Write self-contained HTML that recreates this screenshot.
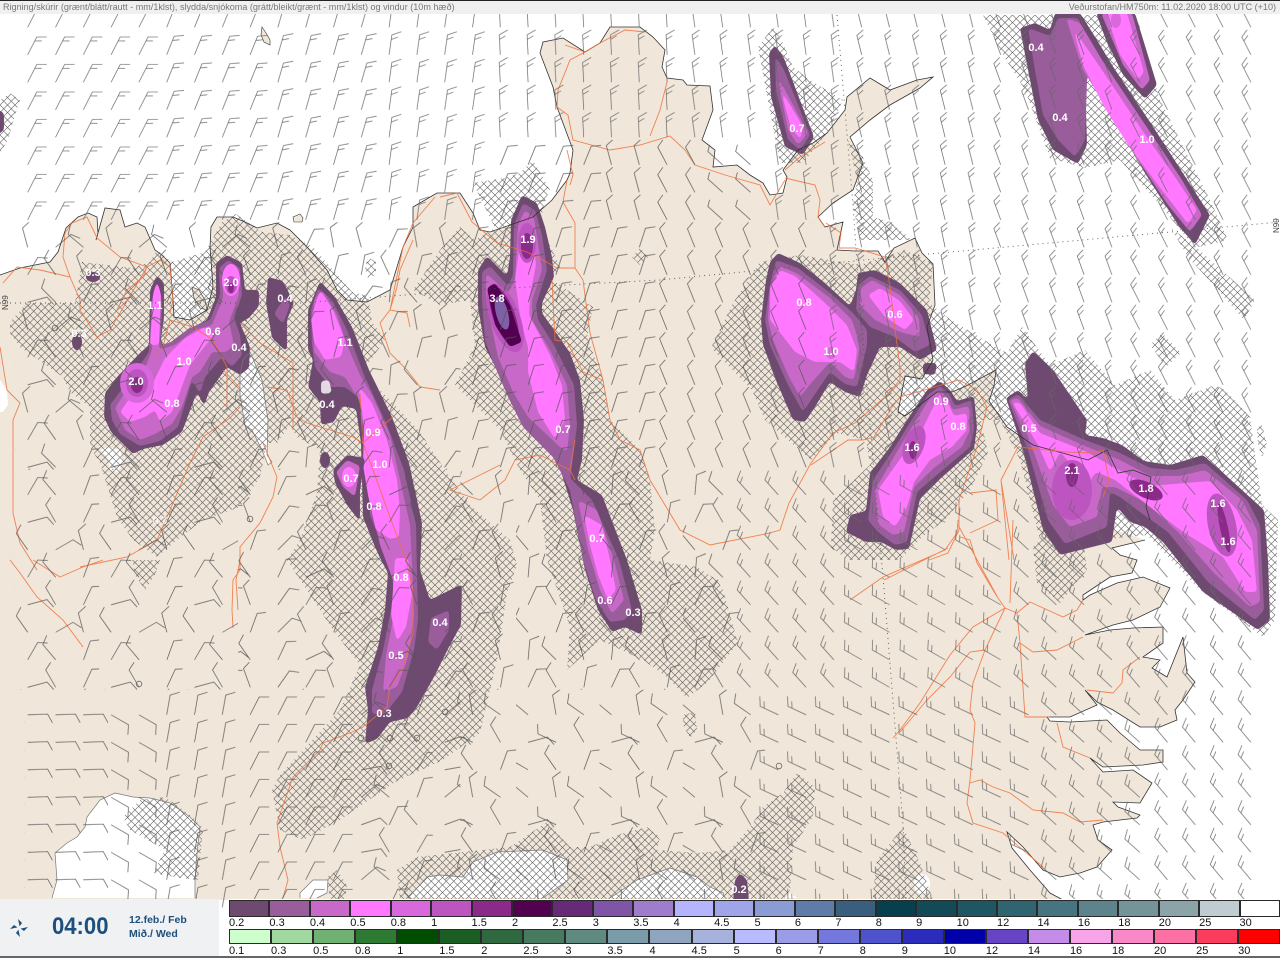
<!DOCTYPE html>
<html><head><meta charset="utf-8"><title>Veðurstofan HM750m</title>
<style>
html,body{margin:0;padding:0;background:#fff}
#w{position:relative;width:1280px;height:958px;overflow:hidden;background:#fff;font-family:"Liberation Sans",sans-serif}
svg{position:absolute;left:0;top:0}
.rn path{filter:url(#s)}
#t{position:absolute;left:0;top:0;width:1280px;height:13px;background:#f0f0f0;border-top:1px solid #222;font-size:9.05px;line-height:12px;color:#777;white-space:nowrap}
#t span{position:absolute;left:3px;top:0}
#t em{position:absolute;right:4px;top:0;font-style:normal}
#p{position:absolute;left:0;top:899px;width:219px;height:58px;background:#f0f1f2;color:#1d4f7e}
#p .c{position:absolute;left:52px;top:14px;font-size:24px;font-weight:bold;line-height:28px;transform:scaleX(.92);transform-origin:0 0}
#p .d{position:absolute;left:129px;top:14px;font-size:10.5px;line-height:14px;font-weight:bold;white-space:nowrap}
#l{position:absolute;left:229px;top:899px;width:1051px;height:59px;background:#fff}
.r{position:absolute;left:0;width:1051px;display:flex}
.r b{display:block;flex:1;box-sizing:border-box;border:1px solid #2a2a2a;position:relative}
.r i{position:absolute;left:-1px;font:11px/12px "Liberation Sans",sans-serif;color:#111;white-space:nowrap}
#r1{top:1px}#r1 b{height:17px}#r1 i{top:16px}
#r2{top:30px}#r2 b{height:15px}#r2 i{top:15px}
#e{position:absolute;left:0;top:956px;width:1280px;height:2px;background:#666}
</style></head><body><div id="w">
<svg width="1280" height="958" viewBox="0 0 1280 958">
<defs>
<filter id="s" x="-20%" y="-20%" width="140%" height="140%" color-interpolation-filters="sRGB"><feGaussianBlur stdDeviation="1.8"/><feComponentTransfer><feFuncA type="linear" slope="8" intercept="-3.5"/></feComponentTransfer></filter>
<path id="f" d="M0 0V-20l8.9-4.5M0-15.5l6.2-3.2" fill="none" stroke="#666" stroke-width=".7"/>
<path id="o" d="M0 0V-20l8.9-4.5" fill="none" stroke="#555" stroke-width=".7"/>
<pattern id="h" width="7.5" height="7.5" patternUnits="userSpaceOnUse"><path d="M-1 -1L8.5 8.5M8.5 -1L-1 8.5" stroke="#5a5a5a" stroke-width=".6" fill="none"/></pattern>
<pattern id="L27" x="23.7" y="2.3" width="27.8" height="27.5" patternUnits="userSpaceOnUse"><use href="#f" transform="translate(4,25)rotate(27)"/></pattern>
<pattern id="L22" x="23.7" y="2.3" width="27.8" height="27.5" patternUnits="userSpaceOnUse"><use href="#f" transform="translate(4,25)rotate(22)"/></pattern>
<pattern id="L16" x="23.7" y="2.3" width="27.8" height="27.5" patternUnits="userSpaceOnUse"><use href="#f" transform="translate(4,25)rotate(16)"/></pattern>
<pattern id="L8" x="23.7" y="2.3" width="27.8" height="27.5" patternUnits="userSpaceOnUse"><use href="#f" transform="translate(4,25)rotate(8)"/></pattern>
<pattern id="Lo22" x="23.7" y="2.3" width="27.8" height="27.5" patternUnits="userSpaceOnUse"><use href="#o" transform="translate(4,25)rotate(22)"/></pattern>
<pattern id="Lo20" x="23.7" y="2.3" width="27.8" height="27.5" patternUnits="userSpaceOnUse"><use href="#o" transform="translate(4,25)rotate(18)"/></pattern>
<pattern id="Lo8" x="23.7" y="2.3" width="27.8" height="27.5" patternUnits="userSpaceOnUse"><use href="#o" transform="translate(4,25)rotate(10)"/></pattern>
<pattern id="Lo25" x="23.7" y="2.3" width="27.8" height="27.5" patternUnits="userSpaceOnUse"><use href="#o" transform="translate(4,25)rotate(27)"/></pattern>
<pattern id="R3" x="7.7" y="2.3" width="27.8" height="27.5" patternUnits="userSpaceOnUse"><use href="#f" transform="translate(20,25)rotate(-3)"/></pattern>
<pattern id="R8" x="7.7" y="2.3" width="27.8" height="27.5" patternUnits="userSpaceOnUse"><use href="#f" transform="translate(20,25)rotate(-8)"/></pattern>
<pattern id="R14" x="7.7" y="2.3" width="27.8" height="27.5" patternUnits="userSpaceOnUse"><use href="#f" transform="translate(20,25)rotate(-14)"/></pattern>
<pattern id="R20" x="7.7" y="2.3" width="27.8" height="27.5" patternUnits="userSpaceOnUse"><use href="#f" transform="translate(20,25)rotate(-20)"/></pattern>
<pattern id="R27" x="7.7" y="2.3" width="27.8" height="27.5" patternUnits="userSpaceOnUse"><use href="#f" transform="translate(20,25)rotate(-27)"/></pattern>
<pattern id="R12" x="7.7" y="2.3" width="27.8" height="27.5" patternUnits="userSpaceOnUse"><use href="#f" transform="translate(20,25)rotate(-12)"/></pattern>
<pattern id="R42" x="7.7" y="2.3" width="27.8" height="27.5" patternUnits="userSpaceOnUse"><use href="#f" transform="translate(20,25)rotate(-42)"/></pattern>
<pattern id="R47" x="7.7" y="2.3" width="27.8" height="27.5" patternUnits="userSpaceOnUse"><use href="#f" transform="translate(20,25)rotate(-47)"/></pattern>
<pattern id="R40" x="7.7" y="2.3" width="27.8" height="27.5" patternUnits="userSpaceOnUse"><use href="#f" transform="translate(20,25)rotate(-40)"/></pattern>
<pattern id="Ro15" x="7.7" y="2.3" width="27.8" height="27.5" patternUnits="userSpaceOnUse"><use href="#o" transform="translate(20,25)rotate(-15)"/></pattern>
<pattern id="Ro28" x="7.7" y="2.3" width="27.8" height="27.5" patternUnits="userSpaceOnUse"><use href="#o" transform="translate(20,25)rotate(-28)"/></pattern>
<pattern id="Ro22" x="7.7" y="2.3" width="27.8" height="27.5" patternUnits="userSpaceOnUse"><use href="#o" transform="translate(20,25)rotate(-22)"/></pattern>
<pattern id="E48" x="2.7" y="7.3" width="27.8" height="27.5" patternUnits="userSpaceOnUse"><use href="#o" transform="translate(25,20)rotate(-48)"/></pattern>
<pattern id="E60" x="2.7" y="7.3" width="27.8" height="27.5" patternUnits="userSpaceOnUse"><use href="#f" transform="translate(25,20)rotate(-60)"/></pattern>
<pattern id="E65" x="2.7" y="7.3" width="27.8" height="27.5" patternUnits="userSpaceOnUse"><use href="#f" transform="translate(25,20)rotate(-65)"/></pattern>
<pattern id="R48" x="7.7" y="2.3" width="27.8" height="27.5" patternUnits="userSpaceOnUse"><use href="#f" transform="translate(20,25)rotate(-48)"/></pattern>
<pattern id="D88" x="24.7" y="17.3" width="27.8" height="27.5" patternUnits="userSpaceOnUse"><use href="#o" transform="translate(3,10)rotate(88)"/></pattern>
<pattern id="S120" x="19.7" y="25.3" width="27.8" height="27.5" patternUnits="userSpaceOnUse"><use href="#o" transform="translate(8,2)rotate(120)"/></pattern>
<pattern id="CA" x="15.7" y="2.3" width="83.4" height="82.5" patternUnits="userSpaceOnUse"><use href="#o" transform="translate(12,25)rotate(30)"/><use href="#o" transform="translate(40,25)rotate(-35)"/><use href="#o" transform="translate(67.8,25)rotate(-20)"/><use href="#o" transform="translate(12,52.5)rotate(75)"/><use href="#o" transform="translate(40,52.5)rotate(-45)"/><use href="#o" transform="translate(67.8,52.5)rotate(25)"/><use href="#o" transform="translate(12,80)rotate(-15)"/><use href="#o" transform="translate(40,80)rotate(50)"/><use href="#o" transform="translate(67.8,80)rotate(-50)"/></pattern>
<pattern id="CB" x="15.7" y="2.3" width="83.4" height="82.5" patternUnits="userSpaceOnUse"><use href="#o" transform="translate(12,25)rotate(10)"/><use href="#o" transform="translate(40,25)rotate(-25)"/><use href="#o" transform="translate(67.8,25)rotate(15)"/><use href="#o" transform="translate(12,52.5)rotate(35)"/><use href="#o" transform="translate(40,52.5)rotate(5)"/><use href="#o" transform="translate(67.8,52.5)rotate(-40)"/><use href="#o" transform="translate(12,80)rotate(-15)"/><use href="#o" transform="translate(40,80)rotate(25)"/><use href="#o" transform="translate(67.8,80)rotate(-10)"/></pattern>
<pattern id="CC" x="15.7" y="2.3" width="83.4" height="82.5" patternUnits="userSpaceOnUse"><use href="#o" transform="translate(12,25)rotate(75)"/><use href="#o" transform="translate(40,25)rotate(-30)"/><use href="#o" transform="translate(67.8,25)rotate(25)"/><use href="#o" transform="translate(12,52.5)rotate(-35)"/><use href="#o" transform="translate(40,52.5)rotate(60)"/><use href="#o" transform="translate(67.8,52.5)rotate(-15)"/><use href="#o" transform="translate(12,80)rotate(30)"/><use href="#o" transform="translate(40,80)rotate(-40)"/><use href="#o" transform="translate(67.8,80)rotate(20)"/></pattern>
<pattern id="CD" x="15.7" y="2.3" width="83.4" height="82.5" patternUnits="userSpaceOnUse"><use href="#o" transform="translate(12,25)rotate(35)"/><use href="#o" transform="translate(40,25)rotate(30)"/><use href="#o" transform="translate(67.8,25)rotate(-20)"/><use href="#o" transform="translate(12,52.5)rotate(45)"/><use href="#o" transform="translate(40,52.5)rotate(-25)"/><use href="#o" transform="translate(67.8,52.5)rotate(20)"/><use href="#o" transform="translate(12,80)rotate(25)"/><use href="#o" transform="translate(40,80)rotate(65)"/><use href="#o" transform="translate(67.8,80)rotate(-35)"/></pattern>
<pattern id="CE" x="15.7" y="2.3" width="83.4" height="82.5" patternUnits="userSpaceOnUse"><use href="#o" transform="translate(12,25)rotate(25)"/><use href="#o" transform="translate(40,25)rotate(-30)"/><use href="#o" transform="translate(67.8,25)rotate(10)"/><use href="#o" transform="translate(12,52.5)rotate(-40)"/><use href="#o" transform="translate(40,52.5)rotate(20)"/><use href="#o" transform="translate(67.8,52.5)rotate(-25)"/><use href="#o" transform="translate(12,80)rotate(5)"/><use href="#o" transform="translate(40,80)rotate(-45)"/><use href="#o" transform="translate(67.8,80)rotate(-15)"/></pattern>
<pattern id="CF" x="15.7" y="2.3" width="83.4" height="82.5" patternUnits="userSpaceOnUse"><use href="#o" transform="translate(12,25)rotate(80)"/><use href="#o" transform="translate(40,25)rotate(-30)"/><use href="#o" transform="translate(67.8,25)rotate(30)"/><use href="#o" transform="translate(12,52.5)rotate(50)"/><use href="#o" transform="translate(40,52.5)rotate(-50)"/><use href="#o" transform="translate(67.8,52.5)rotate(20)"/><use href="#o" transform="translate(12,80)rotate(70)"/><use href="#o" transform="translate(40,80)rotate(25)"/><use href="#o" transform="translate(67.8,80)rotate(-40)"/></pattern>
<pattern id="CG" x="15.7" y="2.3" width="83.4" height="82.5" patternUnits="userSpaceOnUse"><use href="#o" transform="translate(12,25)rotate(-60)"/><use href="#o" transform="translate(40,25)rotate(-35)"/><use href="#o" transform="translate(67.8,25)rotate(20)"/><use href="#o" transform="translate(12,52.5)rotate(-50)"/><use href="#o" transform="translate(40,52.5)rotate(-10)"/><use href="#o" transform="translate(67.8,52.5)rotate(-55)"/><use href="#o" transform="translate(12,80)rotate(75)"/><use href="#o" transform="translate(40,80)rotate(-65)"/><use href="#o" transform="translate(67.8,80)rotate(-30)"/></pattern>
</defs>

<!-- land -->
<path fill="#f0e6d9" d="M0,275 20,268 50,262 58,252 66,228 78,217 88,213 97,217 98,233 96,240 105,208 120,210 125,227 137,223 145,227 155,250 162,255 170,263 173,300 174,317 190,320 207,310 213,287 210,247 211,227 217,217 233,217 245,222 257,228 277,223 290,230 307,247 327,270 337,290 347,300 367,302 390,290 397,267 403,247 413,227 413,207 437,193 460,193 473,213 480,230 490,232 533,217 552,200 567,180 570,173 573,150 557,107 553,87 540,53 543,42 563,38 585,52 600,43 610,27 640,27 653,37 665,50 662,67 667,78 683,80 687,85 710,86 713,110 702,140 715,150 713,167 737,165 750,175 763,183 770,195 783,193 787,177 783,170 798,150 813,143 827,133 845,110 847,97 870,78 890,90 917,80 933,77 920,88 890,105 870,120 850,137 863,163 853,190 833,203 818,217 825,227 843,222 837,250 855,251 878,251 885,262 894,248 915,238 922,253 933,264 935,305 927,327 933,360 922,379 905,376 898,412 905,416 937,392 952,392 966,386 996,370 994,386 989,401 1007,427 1033,445 1088,460 1107,464 1115,530 1145,540 1112,548 1120,555 1137,560 1132,573 1110,577 1083,595 1083,600 1090,595 1117,583 1143,577 1170,588 1160,607 1133,620 1113,625 1085,635 1110,630 1133,628 1163,627 1163,643 1143,657 1160,660 1152,668 1167,677 1183,637 1187,673 1195,682 1183,700 1175,710 1177,720 1160,727 1140,727 1113,710 1097,702 1085,690 1097,705 1070,717 1047,717 1050,721 1070,722 1107,720 1120,733 1140,750 1163,750 1163,762 1143,765 1103,767 1090,758 1103,772 1133,770 1152,783 1140,803 1113,802 1118,807 1140,815 1137,818 1103,822 1093,825 1098,840 1112,850 1097,867 1080,873 1060,877 1043,870 1023,847 1007,832 1012,848 1030,870 1050,893 1063,900 0,900Z"/>
<path fill="#f0e6d9" stroke="#333" stroke-width=".6" d="M262,27 266,33 270,40 270,45 264,42 261,35Z M293,217 300,214 303,218 302,222 294,222Z M192,287 199,290 205,300 207,310 200,308 194,298Z"/>
<!-- white holes -->
<path fill="#fff" d="M0,380 7,390 8,405 3,412 0,412Z M237,320 243,320 243,360 250,352 262,380 268,420 267,455 272,462 268,465 262,450 252,430 245,425 240,395 240,375Z M52,898 57,880 55,853 67,843 77,837 85,827 87,817 100,800 115,793 133,797 150,798 170,803 190,817 200,827 197,853 195,880 195,898Z M300,898 300,893 313,880 328,880 327,893 317,898Z M408,898 427,877 440,875 463,877 473,862 497,852 543,850 567,860 568,880 543,898Z M610,898 637,880 670,868 697,877 710,887 723,893 725,898Z M785,898 790,893 797,898Z M100,450 108,447 120,450 123,462 118,472 110,470 108,458Z"/>
<ellipse cx="922" cy="884" rx="8" ry="10" fill="#fff"/>
<!-- hatch -->
<g fill="url(#h)">
<path d="M10,333 10,322 27,303 75,303 82,262 132,268 150,262 157,250 172,262 205,252 222,222 236,214 262,232 290,235 313,247 340,278 352,292 368,296 372,322 385,340 362,372 393,403 420,432 445,470 470,505 510,540 517,565 507,593 497,660 480,733 443,760 395,782 340,820 303,840 280,830 272,790 280,775 340,710 360,665 333,630 320,610 287,560 300,540 317,493 320,450 297,437 290,425 277,443 267,443 260,477 240,507 203,520 177,540 157,557 133,540 117,517 100,463 90,447 90,407 70,392 63,377 20,347Z"/>
<path d="M413,290 440,250 460,227 475,240 495,228 473,183 505,178 520,173 533,160 550,190 545,200 540,223 560,267 552,280 593,307 587,337 603,380 610,420 640,450 650,480 655,530 650,560 697,567 717,580 723,590 738,643 707,683 687,698 667,677 643,660 600,640 567,670 570,627 547,560 540,500 520,470 500,430 455,385 475,345 470,300 440,305Z"/>
<path d="M733,303 711,348 752,390 765,420 811,460 837,433 866,440 870,465 833,500 831,547 848,560 900,560 922,537 945,520 970,490 988,453 981,420 1000,420 1020,460 1040,540 1033,547 1037,583 1060,603 1087,570 1083,540 1100,540 1147,535 1200,590 1263,637 1275,620 1278,520 1262,505 1250,417 1225,390 1215,385 1175,400 1150,370 1115,385 1085,350 1050,365 1022,327 1007,353 996,347 951,320 929,303 933,263 905,250 860,265 800,255 760,262Z"/>
<path d="M983,15 1130,15 1143,45 1160,100 1210,200 1228,240 1195,248 1160,205 1120,160 1085,168 1050,158 1025,90 1000,50Z"/>
<path d="M1170,227 1196,247 1255,300 1244,320 1218,290 1188,257Z"/>
<path d="M1162,333 1181,353 1166,367 1150,345Z"/>
<path d="M1257,428 1262,425 1267,445 1262,457 1258,445Z"/>
<path d="M773,27 783,43 793,67 810,80 843,100 827,133 803,163 780,163 773,127 758,47Z"/>
<path d="M848,140 862,155 873,180 873,217 890,222 912,240 860,240 853,205 857,180Z"/>
<path d="M397,870 417,857 510,847 547,822 570,847 590,847 617,835 647,827 660,837 657,850 697,853 730,850 753,823 763,807 783,793 797,773 815,787 813,817 793,847 790,890 783,900 400,900Z"/>
<path d="M327,877 337,870 347,885 345,900 330,900Z"/>
<path d="M873,893 877,860 903,827 920,863 933,900 873,900Z"/>
<path d="M123,817 140,800 165,797 190,815 203,828 198,880 180,878 153,873 165,850 130,830Z"/>
<path d="M132,560 160,560 155,575 145,590 135,575Z"/>
<path d="M683,715 695,712 697,730 690,738 683,725Z"/>
<path d="M0,100 10,93 20,100 15,115 8,140 0,153Z"/>
<path d="M368,257 376,262 376,275 368,278 365,268Z"/>
<path d="M640,248 648,257 640,265 632,257Z"/>
</g>
<!-- rain -->
<g class="rn">
<!-- R1 -->
<path fill="#6f4a70" d="M105,393 117,377 140,353 149,345 150,290 157,275 164,283 164,317 160,346 167,345 187,330 207,320 216,297 216,263 227,255 242,263 245,290 259,290 259,306 249,318 240,323 250,347 249,368 240,375 227,367 209,392 204,406 197,392 182,432 163,445 143,449 133,454 111,432 104,417Z"/>
<path fill="#9a5d9c" d="M110,405 125,385 140,365 149,352 152,300 157,280 162,300 161,345 172,342 190,328 210,320 220,295 219,268 228,260 240,268 242,295 234,318 240,335 242,355 232,367 222,357 205,377 200,394 192,380 178,427 160,441 140,446 120,434 112,420Z"/>
<path fill="#c868c8" d="M115,408 128,388 145,368 152,350 154,300 157,285 161,300 159,350 175,345 195,330 212,325 223,298 223,272 230,266 238,275 239,295 229,322 234,345 226,352 212,352 200,372 192,377 182,407 172,424 155,434 140,440 125,430Z"/>
<path fill="#ff78ff" d="M120,412 132,395 152,385 165,358 185,338 205,327 214,335 202,350 190,365 180,392 172,412 160,422 155,410 145,417 130,422Z M150,345 153,295 157,280 161,295 159,345Z"/>
<ellipse cx="231" cy="280" rx="9" ry="16" fill="#ff78ff"/><ellipse cx="231" cy="285" rx="6" ry="9" fill="#bd55c0"/><ellipse cx="231" cy="288" rx="3" ry="5" fill="#8c2a8c"/>
<ellipse cx="137" cy="383" rx="17" ry="20" fill="#d968dd"/><ellipse cx="137" cy="383" rx="11" ry="14" fill="#bd55c0"/><ellipse cx="137" cy="385" rx="6" ry="8" fill="#8c2a8c"/>
<ellipse cx="93" cy="277" rx="7" ry="5" fill="#6f4a70"/><ellipse cx="77" cy="342" rx="5" ry="8" fill="#6f4a70"/><ellipse cx="325" cy="460" rx="5" ry="8" fill="#6f4a70"/>
<!-- R2 -->
<path fill="#6f4a70" d="M268,277 283,281 294,303 287,320 287,352 272,338 266,303Z"/><path fill="#9a5d9c" d="M274,314 285,296 290,305 283,324Z"/>
<!-- R3 -->
<path fill="#6f4a70" d="M320,281 335,297 352,327 369,370 392,417 409,463 422,523 420,570 430,600 446,592 462,584 461,625 449,647 434,677 417,707 408,718 390,722 377,739 365,744 368,710 365,687 378,647 385,610 388,573 381,560 375,547 363,517 361,443 356,409 342,406 334,422 321,425 320,402 308,387 313,360 308,350 308,310Z"/>
<path fill="#9a5d9c" d="M318,288 332,300 347,330 364,375 387,425 404,470 416,525 417,575 418,620 414,650 402,692 385,714 372,714 372,690 383,650 391,610 395,575 383,548 370,515 366,440 358,397 345,387 330,387 315,367 312,345 311,310Z M428,642 431,618 449,610 449,630 437,650Z"/>
<path fill="#c868c8" d="M314,300 322,290 337,315 347,345 360,375 372,395 390,435 399,475 410,525 412,565 414,615 408,657 397,687 383,692 386,655 393,620 393,580 380,545 372,510 366,450 360,402 345,377 330,372 314,352Z"/>
<path fill="#ff78ff" d="M311,318 320,290 333,310 345,340 341,357 325,360 314,342Z M358,385 372,403 387,440 397,480 400,510 399,537 390,539 376,530 368,495 363,465 364,425Z M395,558 408,558 412,595 406,627 397,642 391,615 393,590Z"/>
<path fill="#6f4a70" d="M333,470 347,455 365,458 360,490 360,522 347,505 335,483Z"/><path fill="#c868c8" d="M336,472 347,460 360,466 355,497 343,487Z"/><ellipse cx="349" cy="477" rx="7" ry="10" fill="#ff78ff"/>
<path fill="#fff" d="M321,381 329,380 332,393 321,394Z" opacity=".8"/>
<!-- R4 -->
<path fill="#6f4a70" d="M522,195 537,203 545,227 552,257 554,277 542,303 542,313 559,337 570,353 580,380 584,420 582,460 577,480 602,495 627,560 642,610 642,635 625,627 612,632 598,610 585,570 573,510 558,462 528,432 513,402 498,372 485,347 478,307 478,270 487,256 507,276 510,257 511,220Z"/>
<path fill="#9a5d9c" d="M482,300 482,272 490,266 508,286 513,275 514,225 523,203 535,210 542,235 547,270 536,305 538,320 554,345 574,385 577,425 572,465 570,478 592,500 619,560 632,610 625,620 610,622 596,600 583,560 570,490 553,457 523,427 508,397 493,362 485,340Z"/>
<path fill="#c868c8" d="M486,300 486,273 508,293 515,280 518,225 525,210 534,218 539,250 542,270 532,300 532,320 550,350 567,385 570,425 567,452 560,447 528,417 513,392 498,357Z M578,500 597,510 614,560 624,600 612,614 600,590 588,550Z"/>
<path fill="#ff78ff" d="M515,280 519,250 526,220 533,235 536,265 530,295 529,315 550,355 562,385 565,420 555,439 538,412 528,372 528,347 521,322Z M584,515 602,525 610,560 616,590 608,600 598,575 590,545Z"/>
<ellipse cx="527" cy="243" rx="9" ry="20" fill="#bd55c0"/><ellipse cx="527" cy="246" rx="6" ry="13" fill="#8c2a8c"/>
<ellipse cx="505" cy="318" rx="15" ry="36" fill="#bd55c0" transform="rotate(-20 505 318)"/>
<ellipse cx="504" cy="316" rx="11" ry="31" fill="#8c2a8c" transform="rotate(-20 504 316)"/>
<path fill="#520050" d="M487,288 495,283 510,305 522,342 510,347 495,325Z"/>
<ellipse cx="502" cy="313" rx="6" ry="17" fill="#7e5fa8" transform="rotate(-15 502 313)"/>
<!-- R5 -->
<path fill="#6f4a70" d="M775,45 784,58 814,137 803,155 785,147 771,97 769,53Z"/><path fill="#9a5d9c" d="M775,55 784,70 810,135 800,150 788,140 776,90Z"/><path fill="#c868c8" d="M777,75 808,133 798,145 788,130Z"/><path fill="#ff78ff" d="M780,88 802,125 801,140 791,128Z"/>
<!-- R6 -->
<path fill="#6f4a70" d="M766,280 770,262 778,253 800,263 825,283 850,306 856,290 858,273 875,270 900,283 927,310 937,350 920,360 900,347 880,347 867,375 860,397 845,392 830,382 815,407 805,422 793,420 778,385 763,345 761,320Z"/>
<path fill="#9a5d9c" d="M770,285 776,260 798,268 830,293 853,313 867,330 867,345 857,387 845,384 830,372 815,394 803,412 788,385 770,345 765,320Z M858,285 870,276 900,290 922,315 930,345 915,352 895,337 870,327 856,310Z"/>
<path fill="#c868c8" d="M770,285 780,266 798,274 830,298 852,320 860,345 854,380 845,377 830,362 812,382 800,397 788,375 773,340 768,320Z M861,288 872,280 900,295 919,318 920,337 900,332 875,320 860,305Z"/>
<path fill="#ff78ff" d="M770,288 780,270 795,276 825,303 847,325 857,350 854,372 840,362 815,362 795,352 778,330 770,320Z M868,295 880,288 900,301 914,320 905,330 885,317Z"/>
<ellipse cx="831" cy="353" rx="5" ry="6" fill="#d968dd"/>
<path fill="#6f4a70" d="M923,363 937,363 935,375 923,374Z"/>
<!-- R7 -->
<path fill="#6f4a70" d="M940,381 950,390 957,401 974,396 977,427 974,449 940,479 920,499 909,549 896,550 881,542 866,542 846,532 850,515 866,511 870,473 890,447 909,417 927,390Z"/>
<path fill="#9a5d9c" d="M940,386 950,395 955,406 972,400 974,430 970,447 938,474 917,492 907,542 895,545 878,532 868,520 873,480 893,450 913,418 928,395Z"/>
<path fill="#c868c8" d="M940,390 949,400 952,410 969,406 970,430 962,447 935,467 914,487 904,532 893,535 878,524 875,490 895,455 915,422 930,398Z"/>
<path fill="#ff78ff" d="M940,393 949,405 954,416 967,413 967,430 952,447 930,460 914,482 907,507 895,527 883,517 878,490 898,462 923,428Z"/>
<ellipse cx="914" cy="445" rx="10" ry="20" fill="#bd55c0" transform="rotate(20 914 445)"/><ellipse cx="913" cy="450" rx="4" ry="9" fill="#8c2a8c"/>
<!-- R8 -->
<path fill="#6f4a70" d="M1006,398 1018,390 1028,400 1025,363 1033,351 1053,370 1087,420 1085,435 1103,438 1122,445 1144,461 1170,465 1203,455 1231,480 1264,510 1268,560 1270,620 1258,630 1203,592 1163,542 1145,527 1130,522 1117,507 1114,527 1112,542 1060,555 1043,530 1023,450Z"/>
<path fill="#9a5d9c" d="M1008,400 1018,394 1040,420 1085,440 1120,453 1150,468 1175,470 1205,463 1247,500 1260,525 1264,610 1255,620 1208,582 1168,532 1140,512 1120,497 1110,492 1107,527 1065,544 1048,520 1028,450Z"/>
<path fill="#c868c8" d="M1010,400 1018,398 1040,426 1085,446 1120,460 1150,476 1180,476 1205,470 1242,500 1257,530 1260,602 1250,607 1213,572 1178,532 1145,502 1115,487 1102,487 1097,517 1070,527 1053,505 1033,450Z"/>
<path fill="#ff78ff" d="M1012,402 1020,403 1040,433 1085,451 1115,468 1150,486 1185,483 1210,481 1237,510 1252,540 1257,592 1245,592 1223,557 1183,532 1150,507 1115,480 1097,472 1092,477 1087,492 1078,472 1060,452 1050,472 1038,445Z"/>
<ellipse cx="1072" cy="490" rx="20" ry="30" fill="#bd55c0"/><ellipse cx="1072" cy="475" rx="6" ry="12" fill="#8c2a8c"/>
<ellipse cx="1146" cy="490" rx="18" ry="8" fill="#8c2a8c" transform="rotate(25 1146 490)"/>
<ellipse cx="1222" cy="525" rx="14" ry="32" fill="#bd55c0" transform="rotate(-12 1222 525)"/><ellipse cx="1224" cy="528" rx="4" ry="25" fill="#8c2a8c" transform="rotate(-12 1224 528)"/>
<!-- R9 -->
<path fill="#6f4a70" d="M1020,28 1035,23 1050,30 1055,13 1080,13 1097,40 1112,65 1152,125 1197,195 1210,215 1195,245 1178,225 1143,170 1113,110 1090,72 1085,80 1087,145 1078,164 1053,150 1038,120 1028,70Z"/>
<path fill="#9a5d9c" d="M1028,28 1050,36 1058,18 1078,18 1095,55 1087,80 1085,140 1075,157 1058,140 1043,115 1035,70Z"/>
<path fill="#c868c8" d="M1066,18 1080,23 1102,60 1142,120 1182,180 1202,215 1190,232 1168,205 1138,160 1108,110 1083,70Z"/>
<path fill="#ff78ff" d="M1073,28 1102,70 1142,130 1177,180 1197,210 1188,224 1158,185 1128,145 1103,105 1083,65Z"/>
<path fill="#6f4a70" d="M1096,13 1135,13 1157,85 1145,99 1123,75 1106,40Z"/><path fill="#c868c8" d="M1101,13 1132,13 1150,80 1142,90 1123,65Z"/><path fill="#ff78ff" d="M1106,13 1127,13 1144,72 1138,80 1120,55Z"/><ellipse cx="1116" cy="20" rx="5" ry="8" fill="#d968dd"/>
<!-- small -->
<path fill="#6f4a70" d="M733,900 735,880 740,873 747,880 749,900Z M-5,108 4,113 4,130 -5,137Z"/>
</g>
<!-- coast outline -->
<path fill="none" stroke="#333" stroke-width=".8" d="M0,275 20,268 50,262 58,252 66,228 78,217 88,213 97,217 98,233 96,240 105,208 120,210 125,227 137,223 145,227 155,250 162,255 170,263 173,300 174,317 190,320 207,310 213,287 210,247 211,227 217,217 233,217 245,222 257,228 277,223 290,230 307,247 327,270 337,290 347,300 367,302 390,290 397,267 403,247 413,227 413,207 437,193 460,193 473,213 480,230 490,232 533,217 552,200 567,180 570,173 573,150 557,107 553,87 540,53 543,42 563,38 585,52 600,43 610,27 640,27 653,37 665,50 662,67 667,78 683,80 687,85 710,86 713,110 702,140 715,150 713,167 737,165 750,175 763,183 770,195 783,193 787,177 783,170 798,150 813,143 827,133 845,110 847,97 870,78 890,90 917,80 933,77 920,88 890,105 870,120 850,137 863,163 853,190 833,203 818,217 825,227 843,222 837,250 855,251 878,251 885,262 894,248 915,238 922,253 933,264 935,305 927,327 933,360 922,379 905,376 898,412 905,416 937,392 952,392 966,386 996,370 994,386 989,401 1007,427 1033,445 1088,460 1107,450 1118,473 1133,470 1151,477 1146,507 1150,520 M1145,540 1112,548 1120,555 1137,560 1132,573 1110,577 1083,595 1083,600 1090,595 1117,583 1143,577 1170,588 1160,607 1133,620 1113,625 1085,635 1110,630 1133,628 1163,627 1163,643 1143,657 1160,660 1152,668 1167,677 1183,637 1187,673 1195,682 1183,700 1175,710 1177,720 1160,727 1140,727 1113,710 1097,702 1085,690 1097,705 1070,717 1047,717 1050,721 1070,722 1107,720 1120,733 1140,750 1163,750 1163,762 1143,765 1103,767 1090,758 1103,772 1133,770 1152,783 1140,803 1113,802 1118,807 1140,815 1137,818 1103,822 1093,825 1098,840 1112,850 1097,867 1080,873 1060,877 1043,870 1023,847 1007,832 1012,848 1030,870 1050,893 1063,900"/>
<path fill="none" stroke="#777" stroke-width=".7" d="M52,898 57,880 55,853 67,843 77,837 85,827 87,817 100,800 115,793 133,797 150,798 170,803 190,817 200,827 197,853 195,880 195,898 M300,898 300,893 313,880 328,880 327,893 317,898 M408,898 427,877 440,875 463,877 473,862 497,852 543,850 567,860 568,880 543,898 M610,898 637,880 670,868 697,877 710,887 723,893 725,898 M243,360 250,352 262,380 268,420 267,455 272,462 268,465 262,450 252,430 245,425 240,395 240,375Z"/>
<!-- roads -->
<g fill="none" stroke="#f0703a" stroke-width=".9" opacity=".85">
<path d="M3,283 17,267 40,270 70,277 80,300 80,310 97,337 110,330 120,313 147,267 120,257 97,238 87,217 72,223 65,233 63,257 70,277"/>
<path d="M147,267 160,260 170,267 173,300 170,313 M147,267 143,277 127,290 117,310"/>
<path d="M0,347 7,390 20,403 13,420 13,487 13,513 20,543 37,570 M10,560 20,573 37,597 63,620 83,647"/>
<path d="M80,567 127,557 157,540 173,503 190,463 203,437 230,418 240,407 M33,560 60,577 83,567 103,560"/>
<path d="M153,357 163,347 170,320 193,327 213,340 227,367 227,410 M223,370 240,388"/>
<path d="M240,323 260,343 293,363 293,430 M267,387 287,390 297,417 307,423 353,437 363,443 387,422 393,417"/>
<path d="M263,443 277,477 273,497 260,523 240,547 240,570 233,580 232,610 233,628 M240,560 236,580 238,610"/>
<path d="M440,390 420,387 407,370 390,353 380,323 390,310 407,313 410,327 M390,310 397,287 400,270 413,240 M435,197 413,223 403,247 390,310"/>
<path d="M360,393 363,443 373,470 390,517 407,563 413,593 413,633 403,667 390,687 387,707 363,727 350,733 323,743 320,750 293,777 277,823 280,847 288,880 283,898"/>
<path d="M440,197 457,193 472,222 497,243 527,252 543,260 557,268 575,268 575,223 563,202 567,180 M575,268 583,280 590,333 603,380 610,420 M552,280 555,340 567,342 583,372 603,380"/>
<path d="M610,420 620,440 640,450 650,480 680,530 710,545 770,533 780,530 789,503 811,463 833,433 855,423 885,397 900,380 900,367 896,337 890,287 885,257 855,248 839,248 841,233 826,223"/>
<path d="M811,465 848,440 863,440 874,437 892,407 900,397 959,380 977,390 987,407 977,447 959,500 959,530 948,553 929,560 M970,493 996,490 998,520 970,533"/>
<path d="M1018,447 1001,480 1014,560 M1018,447 1066,452 1092,453 1103,450 1109,480 1103,497 M1001,480 1009,560"/>
<path d="M500,465 450,490 480,500 505,480 515,460 540,455 570,470 575,440 M570,470 575,480"/>
<path d="M958,520 957,533 945,550 883,577 850,600 M960,537 970,540 977,563 993,590 998,598 M1013,520 1010,603 M948,548 884,580 M958,525 998,598"/>
<path d="M998,598 1005,608 973,627 950,655 920,703 900,730 893,738 M1005,608 985,650 973,683 970,710 975,723 970,780 967,803 973,823 1003,833 1043,867 M970,783 980,780 993,787 1010,793 1033,810 1063,813 1080,822 1103,820 M985,650 970,652 950,677 927,700 900,732"/>
<path d="M1005,608 1017,613 1020,643 1025,717 1050,717 M1020,643 1033,652 1057,650 1083,637 M1017,613 1030,602 1063,617 1077,610 1083,600 M1057,723 1063,747 1090,758 M1087,690 1113,693 1122,683 1123,670 1140,657"/>
<path d="M565,45 585,52 600,43 625,30 645,32 M557,107 558,90 570,60 585,52 M557,107 568,115 573,140 610,150 640,145 670,136 685,150 695,165 725,175 760,185 770,205 785,180 M667,82 660,110 650,136 M785,178 815,185 820,200 818,217 825,227 M785,170 800,157 825,142"/>
<path d="M567,150 573,175 570,185"/>
</g>
<!-- dotted -->
<g fill="none" stroke="#555" stroke-width=".9" stroke-dasharray="1 4">
<path d="M0,303 300,303 470,290 660,280 885,258 1280,222"/>
<path d="M837,15 853,205 860,307 883,577 903,825 906,900"/>
</g>
<!-- barbs -->
<g>
<rect x="23.7" y="2.3" width="139" height="220" fill="url(#L27)"/>
<rect x="162.7" y="2.3" width="111.2" height="220" fill="url(#L22)"/>
<rect x="273.9" y="2.3" width="111.2" height="220" fill="url(#L16)"/>
<rect x="385.1" y="2.3" width="111.2" height="220" fill="url(#L8)"/>
<rect x="480.3" y="2.3" width="194.6" height="137.5" fill="url(#R3)"/>
<rect x="674.9" y="2.3" width="166.8" height="137.5" fill="url(#R8)"/>
<rect x="496.3" y="139.8" width="111.2" height="82.5" fill="url(#Lo22)"/>
<rect x="591.5" y="139.8" width="55.6" height="82.5" fill="url(#Ro15)"/>
<rect x="647.1" y="139.8" width="55.6" height="82.5" fill="url(#Ro28)"/>
<rect x="697.7" y="139.8" width="55.6" height="82.5" fill="url(#E48)"/>
<rect x="758.3" y="139.8" width="83.4" height="82.5" fill="url(#R8)"/>
<rect x="841.7" y="2.3" width="139" height="220" fill="url(#R14)"/>
<rect x="980.7" y="2.3" width="139" height="220" fill="url(#R20)"/>
<rect x="1119.7" y="2.3" width="139" height="220" fill="url(#R27)"/>
<rect x="15.7" y="222.3" width="250.2" height="247.5" fill="url(#CA)"/>
<rect x="265.9" y="222.3" width="194.6" height="247.5" fill="url(#CB)"/>
<rect x="468.5" y="222.3" width="194.6" height="247.5" fill="url(#Lo20)"/>
<rect x="647.1" y="222.3" width="166.8" height="247.5" fill="url(#Ro22)"/>
<rect x="813.9" y="222.3" width="166.8" height="247.5" fill="url(#R12)"/>
<rect x="980.7" y="222.3" width="139" height="247.5" fill="url(#R20)"/>
<rect x="1119.7" y="222.3" width="139" height="247.5" fill="url(#R27)"/>
<rect x="15.7" y="469.8" width="222.4" height="220" fill="url(#CC)"/>
<rect x="238.1" y="469.8" width="222.4" height="220" fill="url(#CD)"/>
<rect x="460.5" y="469.8" width="278" height="220" fill="url(#CE)"/>
<rect x="730.5" y="469.8" width="111.2" height="220" fill="url(#R42)"/>
<rect x="836.7" y="474.8" width="166.8" height="220" fill="url(#E60)"/>
<rect x="1008.5" y="469.8" width="111.2" height="220" fill="url(#R47)"/>
<rect x="1119.7" y="469.8" width="139" height="220" fill="url(#R40)"/>
<rect x="24.7" y="704.8" width="83.4" height="220" fill="url(#D88)"/>
<rect x="103.1" y="712.8" width="55.6" height="192.5" fill="url(#S120)"/>
<rect x="162.7" y="689.8" width="83.6" height="220" fill="url(#Lo8)"/>
<rect x="246.1" y="689.8" width="111.2" height="220" fill="url(#Lo25)"/>
<rect x="357.3" y="689.8" width="103.2" height="220" fill="url(#CF)"/>
<rect x="460.5" y="689.8" width="304.5" height="220" fill="url(#CG)"/>
<rect x="753.3" y="694.8" width="278" height="220" fill="url(#E65)"/>
<rect x="1036.3" y="689.8" width="111.2" height="220" fill="url(#R48)"/>
<rect x="1147.5" y="689.8" width="111.2" height="220" fill="url(#R40)"/>
</g>
<!-- towns -->
<g fill="none" stroke="#666" stroke-width=".8">
<circle cx="139" cy="684" r="2.8"/><circle cx="779" cy="766" r="2.8"/><circle cx="55" cy="328" r="2.8"/><circle cx="250" cy="519" r="2.8"/><circle cx="361" cy="738" r="2.8"/><circle cx="390" cy="738" r="2.8"/><circle cx="417" cy="738" r="2.8"/><circle cx="389" cy="766" r="2.8"/><circle cx="445" cy="712" r="2.8"/>
</g>
<!-- labels -->
<g font-family="'Liberation Sans',sans-serif" font-size="11" font-weight="bold" fill="#fff" text-anchor="middle">
<text x="136" y="385">2.0</text><text x="184" y="365">1.0</text><text x="172" y="407">0.8</text><text x="213" y="335">0.6</text><text x="239" y="351">0.4</text><text x="231" y="286">2.0</text><text x="155" y="309">1.1</text><text x="93" y="276">0.3</text><text x="79" y="337">0.3</text><text x="285" y="302">0.4</text><text x="345" y="346">1.1</text><text x="327" y="408">0.4</text><text x="373" y="436">0.9</text><text x="380" y="468">1.0</text><text x="351" y="482">0.7</text><text x="374" y="510">0.8</text><text x="401" y="581">0.8</text><text x="440" y="626">0.4</text><text x="396" y="659">0.5</text><text x="384" y="717">0.3</text><text x="528" y="243">1.9</text><text x="497" y="302">3.8</text><text x="563" y="433">0.7</text><text x="597" y="542">0.7</text><text x="605" y="604">0.6</text><text x="633" y="616">0.3</text><text x="797" y="132">0.7</text><text x="804" y="306">0.8</text><text x="831" y="355">1.0</text><text x="895" y="318">0.6</text><text x="941" y="405">0.9</text><text x="958" y="430">0.8</text><text x="912" y="451">1.6</text><text x="1029" y="432">0.5</text><text x="1072" y="474">2.1</text><text x="1146" y="492">1.8</text><text x="1218" y="507">1.6</text><text x="1228" y="545">1.6</text><text x="1036" y="51">0.4</text><text x="1060" y="121">0.4</text><text x="1147" y="143">1.0</text><text x="739" y="893">0.2</text><text x="160" y="524" opacity=".7">0.7</text>
</g>
<g font-family="'Liberation Sans',sans-serif" font-size="8" fill="#444">
<text transform="translate(8,310) rotate(-90)">N99</text>
<text transform="translate(1279,233) rotate(-90)">N99</text>
</g>
</svg>

<div id="t"><span>Rigning/skúrir (grænt/blátt/rautt - mm/1klst), slydda/snjókoma (grátt/bleikt/grænt - mm/1klst) og vindur (10m hæð)</span><em>Veðurstofan/HM750m: 11.02.2020 18:00 UTC (+10)</em></div>

<div id="p">
<svg width="40" height="58" style="left:0;top:0" viewBox="0 0 40 58"><g fill="#1d4f7e" transform="translate(19,29)"><path d="M.6,-1.6 -1,-9 3,-5Z"/><path d="M.6,-1.6 -1,-9 3,-5Z" transform="rotate(90)"/><path d="M.6,-1.6 -1,-9 3,-5Z" transform="rotate(180)"/><path d="M.6,-1.6 -1,-9 3,-5Z" transform="rotate(270)"/></g></svg>
<div class="c">04:00</div>
<div class="d">12.feb./ Feb<br>Mið./ Wed</div>
</div>

<div id="l">
<div class="r" id="r1">
<b style="background:#6f4a70"><i>0.2</i></b><b style="background:#9a5d9c"><i>0.3</i></b><b style="background:#c868c8"><i>0.4</i></b><b style="background:#ff78ff"><i>0.5</i></b><b style="background:#d968dd"><i>0.8</i></b><b style="background:#bd55c0"><i>1</i></b><b style="background:#8c2a8c"><i>1.5</i></b><b style="background:#520050"><i>2</i></b><b style="background:#662a78"><i>2.5</i></b><b style="background:#8055a8"><i>3</i></b><b style="background:#a07ccc"><i>3.5</i></b><b style="background:#b4b4ff"><i>4</i></b><b style="background:#a0a4e8"><i>4.5</i></b><b style="background:#8a9bd6"><i>5</i></b><b style="background:#5f7ca8"><i>6</i></b><b style="background:#38607e"><i>7</i></b><b style="background:#063f4e"><i>8</i></b><b style="background:#124a58"><i>9</i></b><b style="background:#1f5664"><i>10</i></b><b style="background:#2f6470"><i>12</i></b><b style="background:#467480"><i>14</i></b><b style="background:#5d848c"><i>16</i></b><b style="background:#74949a"><i>18</i></b><b style="background:#8aa4a8"><i>20</i></b><b style="background:#c0ccd0"><i>25</i></b><b style="background:#fff"><i>30</i></b>
</div>
<div class="r" id="r2">
<b style="background:#ccffcc"><i>0.1</i></b><b style="background:#a0d8a0"><i>0.3</i></b><b style="background:#70b070"><i>0.5</i></b><b style="background:#2e7a33"><i>0.8</i></b><b style="background:#004d00"><i>1</i></b><b style="background:#1a5e24"><i>1.5</i></b><b style="background:#30693f"><i>2</i></b><b style="background:#487a60"><i>2.5</i></b><b style="background:#5f8a80"><i>3</i></b><b style="background:#7a9ca8"><i>3.5</i></b><b style="background:#8fa4bf"><i>4</i></b><b style="background:#a6b2dc"><i>4.5</i></b><b style="background:#b8bcff"><i>5</i></b><b style="background:#9a9ce8"><i>6</i></b><b style="background:#7478dc"><i>7</i></b><b style="background:#4e52cc"><i>8</i></b><b style="background:#2c2cbc"><i>9</i></b><b style="background:#0000a8"><i>10</i></b><b style="background:#6644c4"><i>12</i></b><b style="background:#c48ce8"><i>14</i></b><b style="background:#f8a4e8"><i>16</i></b><b style="background:#f888c8"><i>18</i></b><b style="background:#fc70a4"><i>20</i></b><b style="background:#fc3c5c"><i>25</i></b><b style="background:#ff0000"><i>30</i></b>
</div>
</div>
<div id="e"></div>
</div></body></html>
